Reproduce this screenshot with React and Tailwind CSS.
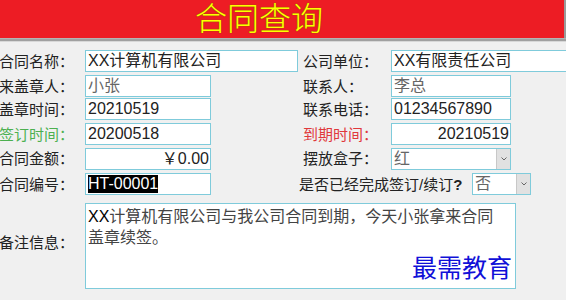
import React from "react";

const font = { fontFamily: '"Liberation Sans", "Noto Sans CJK SC", sans-serif' };

function Label({ children, className = "" }) {
  return (
    <div className={`w-[86px] -ml-[1px] shrink-0 text-[15px] leading-none ${className}`}>
      {children}
    </div>
  );
}

function RightLabel({ children, className = "" }) {
  return (
    <div className={`w-[88px] shrink-0 text-[15px] leading-none ${className}`}>
      {children}
    </div>
  );
}

function Field({ children, className = "", align = "left" }) {
  return (
    <div
      className={`h-[22px] shrink-0 bg-white border border-[#7fcbdb] flex items-center text-[16px] leading-none ${
        align === "right" ? "justify-end pr-[1px]" : "pl-[2px]"
      } ${className}`}
    >
      {children}
    </div>
  );
}

function Combo({ value, className = "" }) {
  return (
    <div
      className={`h-[22px] shrink-0 bg-white border border-[#7fcbdb] flex items-stretch text-[16px] leading-none ${className}`}
    >
      <div className="flex-1 flex items-center pl-[2px] text-[#666]">{value}</div>
      <div className="w-[14px] bg-[#e1e1e1] border-l border-[#c8c8c8] flex items-center justify-center">
        <svg width="8" height="6" viewBox="0 0 8 6">
          <path d="M1.5 1.5 L4 4 L6.5 1.5" fill="none" stroke="#666" strokeWidth="1" />
        </svg>
      </div>
    </div>
  );
}

export default function App() {
  return (
    <div className="relative w-[566px] h-[300px] overflow-hidden bg-[#f0f0f0] text-[#222]" style={font}>
      <div className="h-[42px] flex flex-col">
        <div className="h-[38px] flex">
          <div className="w-[564px] bg-[#ed1c24] pl-[195px] flex items-center">
            <span
              className="text-[32px] leading-none font-light text-[#ffff00]"
              style={{ textShadow: "0 0 1px #8a5a00, 0 0 1px #8a5a00" }}
            >
              合同查询
            </span>
          </div>
          <div className="flex-1 bg-[#9a9a9a]" />
        </div>
        <div className="h-[1px] bg-[#b4b4b4]" />
        <div className="h-[2px] bg-[#a0a0a0]" />
        <div className="h-[1px] bg-[#d8d8d8]" />
      </div>

      <div className="mt-[8px] flex items-center">
        <div className="w-[303px] flex items-center shrink-0">
          <Label>合同名称：</Label>
          <Field className="w-[213px]">XX计算机有限公司</Field>
        </div>
        <RightLabel>公司单位：</RightLabel>
        <Field className="w-[190px]">XX有限责任公司</Field>
      </div>

      <div className="mt-[3px] flex items-center">
        <div className="w-[303px] flex items-center shrink-0">
          <Label>来盖章人：</Label>
          <Field className="w-[126px] text-[#666]">小张</Field>
        </div>
        <RightLabel>联系人：</RightLabel>
        <Field className="w-[120px] text-[#666]">李总</Field>
      </div>

      <div className="mt-[1px] flex items-center">
        <div className="w-[303px] flex items-center shrink-0">
          <Label>盖章时间：</Label>
          <Field className="w-[126px]">20210519</Field>
        </div>
        <RightLabel>联系电话：</RightLabel>
        <Field className="w-[120px]">01234567890</Field>
      </div>

      <div className="mt-[3px] flex items-center">
        <div className="w-[303px] flex items-center shrink-0">
          <Label className="text-[#4cb050]">签订时间：</Label>
          <Field className="w-[126px]">20200518</Field>
        </div>
        <RightLabel className="text-[#e0383c]">到期时间：</RightLabel>
        <Field className="w-[120px]" align="right">20210519</Field>
      </div>

      <div className="mt-[2px] flex items-center">
        <div className="w-[303px] flex items-center shrink-0">
          <Label>合同金额：</Label>
          <Field className="w-[126px] mt-[1px]" align="right">￥0.00</Field>
        </div>
        <RightLabel>摆放盒子：</RightLabel>
        <Combo value="红" className="w-[120px]" />
      </div>

      <div className="mt-[3px] flex items-center">
        <div className="w-[299px] flex items-center shrink-0">
          <Label>合同编号：</Label>
          <Field className="w-[126px]">
            <span className="bg-black text-white leading-[18px]">HT-00001</span>
          </Field>
        </div>
        <div className="w-[173px] shrink-0 text-[15px] leading-none">
          是否已经完成签订/续订<b>?</b>
        </div>
        <Combo value="否" className="w-[59px]" />
      </div>

      <div className="mt-[8px] flex items-center">
        <Label className="-mt-[8px]">备注信息：</Label>
        <div className="w-[431px] h-[86px] bg-white border border-[#7fcbdb] pl-[2px] pt-[2px] text-[16px] leading-[21px] text-[#444]">
          <span className="text-black">XX</span>计算机有限公司与我公司合同到期，今天小张拿来合同
          <br />
          盖章续签。
        </div>
      </div>

      <div className="absolute left-[412px] top-[256px] text-[25px] leading-none text-[#1010d8]">
        最需教育
      </div>
    </div>
  );
}
